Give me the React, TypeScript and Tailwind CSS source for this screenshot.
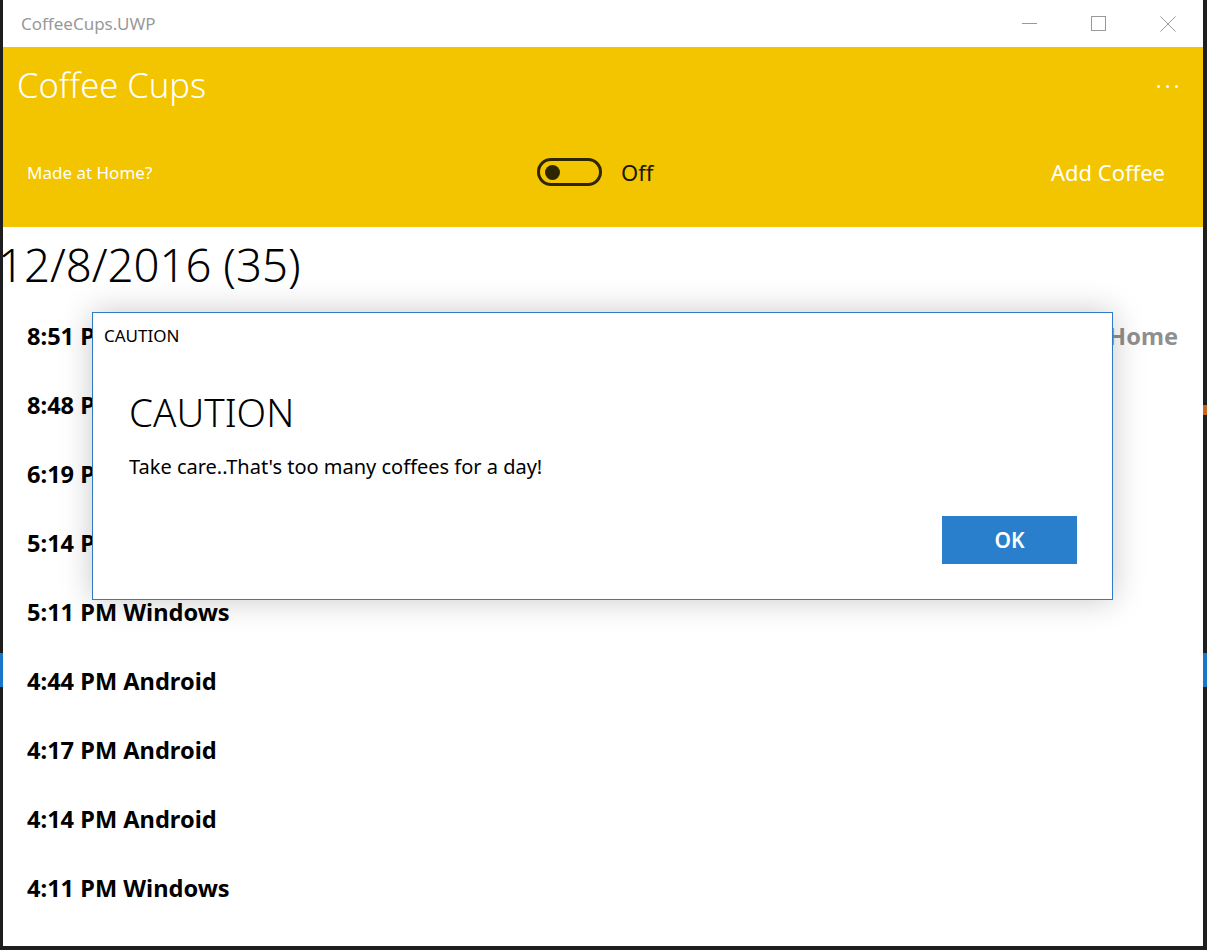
import React from "react";

const font = { fontFamily: '"Noto Sans", "Open Sans", sans-serif' };

const rows = [
  { t: "8:51 PM", r: "Home" },
  { t: "8:48 PM", r: "" },
  { t: "6:19 PM", r: "" },
  { t: "5:14 PM", r: "" },
  { t: "5:11 PM Windows", r: "" },
  { t: "4:44 PM Android", r: "" },
  { t: "4:17 PM Android", r: "" },
  { t: "4:14 PM Android", r: "" },
  { t: "4:11 PM Windows", r: "" },
];

export default function App() {
  return (
    <div className="w-[1207px] h-[950px] bg-[#1e1e1e] flex relative overflow-hidden" style={font}>
      {/* desktop bits peeking */}
      <div className="absolute left-0 top-[653px] w-[3px] h-[34px] bg-[#1b75c9]" />
      <div className="absolute right-0 top-[653px] w-[4px] h-[34px] bg-[#1b75c9]" />
      <div className="absolute right-0 top-[405px] w-[4px] h-[10px] bg-[#c8641e]" />

      <div className="ml-[3px] w-[1200px] h-[946px] bg-white relative overflow-hidden flex flex-col">
        {/* title bar */}
        <div className="h-[47px] flex items-center shrink-0">
          <div className="pl-[18px] text-[17px] text-[#999999] leading-none">CoffeeCups.UWP</div>
          <div className="ml-auto flex h-full pr-[1px]">
            <div className="w-[69px] h-full flex items-center justify-center">
              <div className="w-[15px] h-px bg-[#999999]" />
            </div>
            <div className="w-[69px] h-full flex items-center justify-center">
              <div className="w-[15px] h-[15px] border border-[#999999]" />
            </div>
            <div className="w-[69px] h-full flex items-center justify-center">
              <svg width="16" height="16" viewBox="0 0 16 16">
                <path d="M0.5 0.5 L15.5 15.5 M15.5 0.5 L0.5 15.5" stroke="#999999" strokeWidth="1" />
              </svg>
            </div>
          </div>
        </div>

        {/* yellow header */}
        <div className="h-[180px] bg-[#f2c500] flex flex-col shrink-0">
          <div className="h-[76px] flex items-center pl-[14px] pr-[25px]">
            <div className="text-[34.5px] text-white font-light leading-none">Coffee Cups</div>
            <div className="ml-auto flex gap-[6px] items-center pt-[2px]">
              <div className="w-[3px] h-[3px] rounded-full bg-white" />
              <div className="w-[3px] h-[3px] rounded-full bg-white" />
              <div className="w-[3px] h-[3px] rounded-full bg-white" />
            </div>
          </div>
          <div className="h-[98px] flex items-center pl-[24px] pr-[38px]">
            <div className="w-[510px] text-[17px] text-white leading-none">Made at Home?</div>
            <div className="w-[65px] h-[28px] rounded-full border-[3px] border-[#2e2600] flex items-center pl-[5px]">
              <div className="w-[15px] h-[15px] rounded-full bg-[#2e2600]" />
            </div>
            <div className="ml-[19px] text-[22px] text-[#1a1600] leading-none">Off</div>
            <div className="ml-auto text-[22px] text-white leading-none">Add Coffee</div>
          </div>
        </div>

        {/* heading */}
        <div className="h-[75px] flex items-center shrink-0 -ml-[5px]">
          <div className="text-[45.5px] text-black font-light leading-none whitespace-nowrap">12/8/2016 (35)</div>
        </div>

        {/* list */}
        <div className="flex flex-col">
          {rows.map((r, i) => (
            <div key={i} className="h-[69px] flex items-center pl-[24px] pr-[25px] shrink-0">
              <div className="text-[23.6px] font-bold text-black leading-none">{r.t}</div>
              {r.r && <div className="ml-auto text-[23.6px] font-bold text-[#8f8f8f] leading-none">{r.r}</div>}
            </div>
          ))}
        </div>

        {/* dialog */}
        <div className="absolute left-[89px] top-[312px] w-[1021px] h-[288px] bg-white border border-[#2f7bc4] shadow-[0_0_30px_rgba(0,0,0,0.22)] flex flex-col">
          <div className="pl-[11px] pt-[14px] text-[17px] text-black leading-none">CAUTION</div>
          <div className="pl-[36px] mt-[49px] text-[38.5px] font-light text-black leading-none">CAUTION</div>
          <div className="pl-[36px] mt-[25px] text-[20px] text-black leading-none">Take care..That's too many coffees for a day!</div>
          <div className="mt-auto mb-[35px] flex justify-end pr-[35px]">
            <div className="w-[135px] h-[48px] bg-[#2a7fcd] flex items-center justify-center text-white text-[21px] font-semibold leading-none">OK</div>
          </div>
        </div>
      </div>
    </div>
  );
}
